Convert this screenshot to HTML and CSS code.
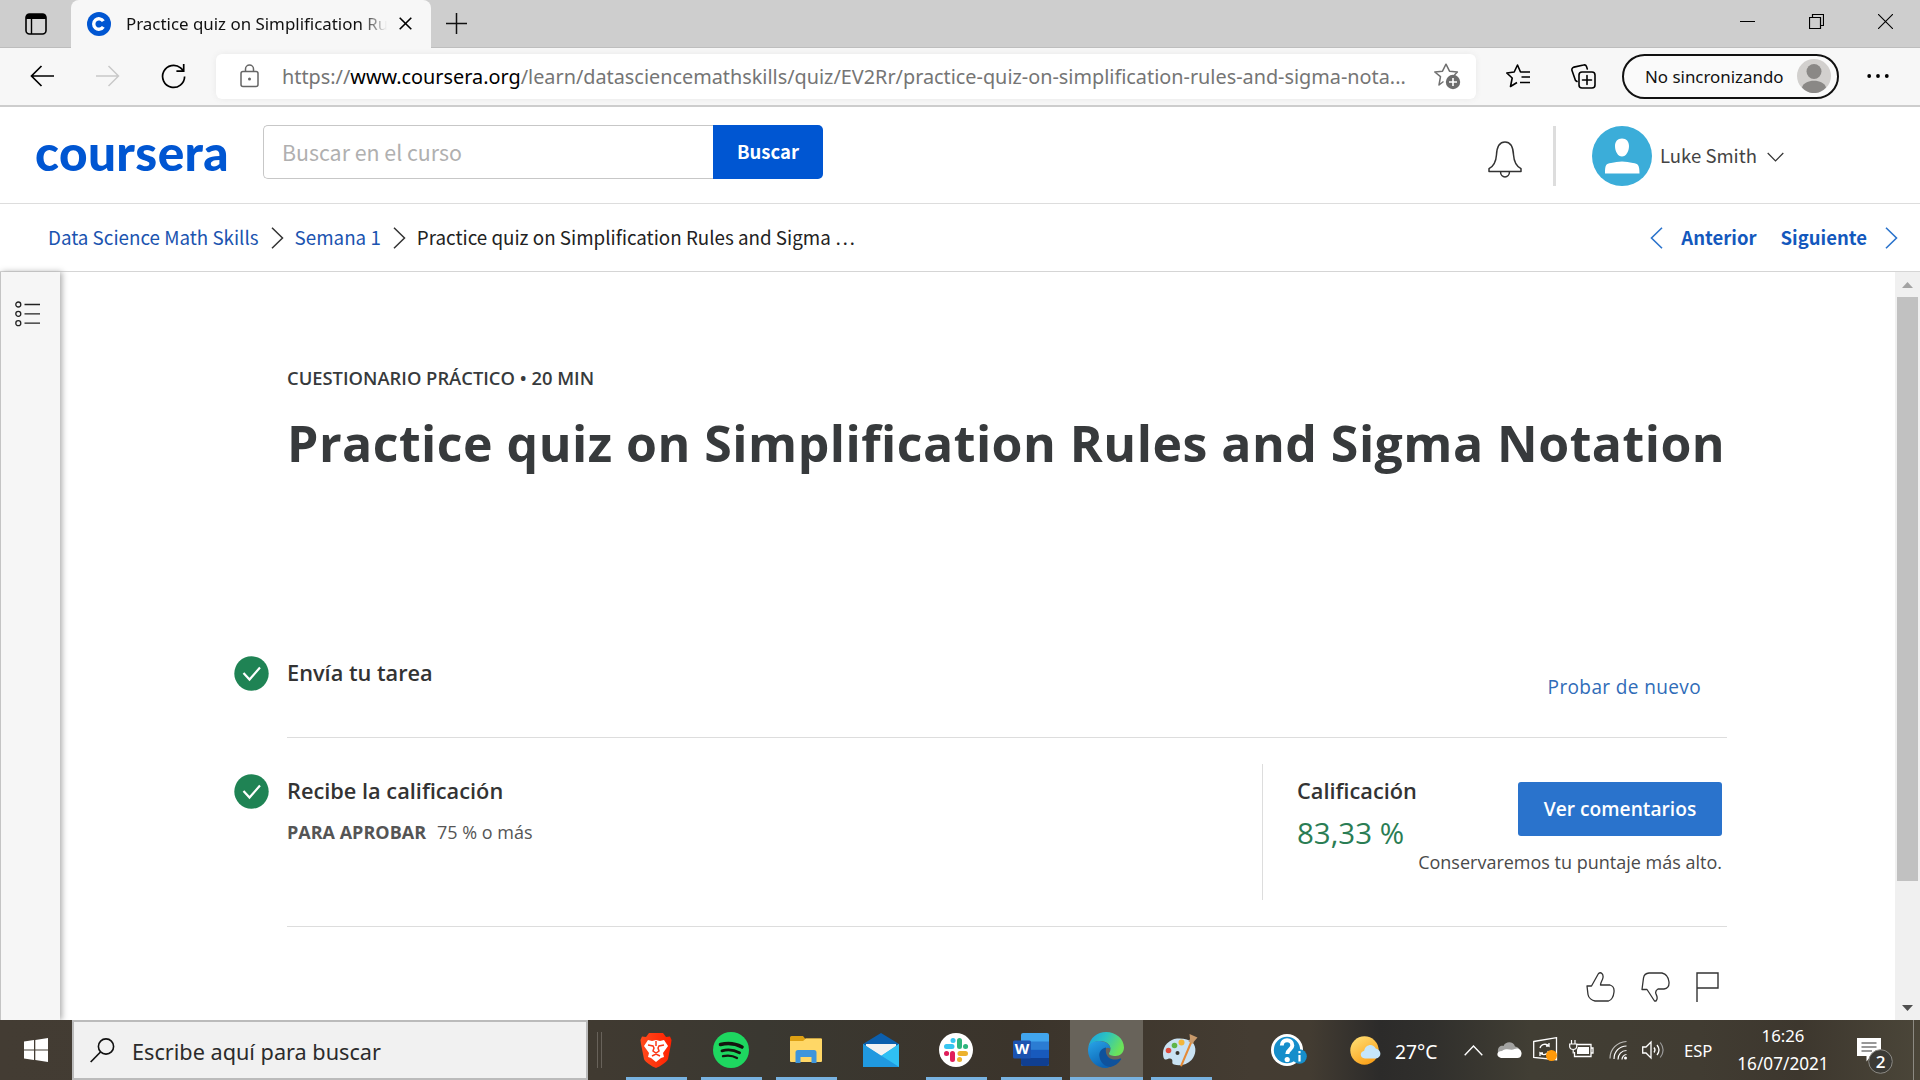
FILE: index.html
```html
<!DOCTYPE html>
<html lang="es">
<head>
<meta charset="utf-8">
<title>Practice quiz on Simplification Rules and Sigma Notation</title>
<link rel="stylesheet" href="styles.css">
</head>
<body>
<div class="screen">
  <div class="tabbar">
    <svg class="tab-actions" width="22" height="22" viewBox="0 0 22 22"><rect x="1" y="1" width="20" height="20" rx="3.5" fill="#d6d6d6" stroke="#000" stroke-width="1.6"/><path d="M1 6V4a3 3 0 0 1 3-3h14a3 3 0 0 1 3 3v2z"/><path d="M6.500 6v15" stroke="#000" stroke-width="1.400"/></svg>
    <div class="tab">
      <svg width="24" height="24" viewBox="0 0 24 24"><circle cx="12" cy="12" r="12" fill="#0056d2"/><path d="M16.300 9.200a5.200 5.200 0 1 0 0 5.600" fill="none" stroke="#fff" stroke-width="3.400"/></svg>
      <span class="tab-title">Practice quiz on Simplification Ru</span>
      <svg class="tab-close" width="13" height="13" viewBox="0 0 13 13"><path d="M.7.7l11.600 11.600M12.300.7L.7 12.300" stroke="#000" stroke-width="1.600"/></svg>
    </div>
    <svg class="tab-new" width="21" height="21" viewBox="0 0 21 21"><path d="M10.500 0v21M0 10.500h21" stroke="#111" stroke-width="1.500"/></svg>
    <div class="window-buttons">
      <svg width="15" height="15" viewBox="0 0 15 15"><path d="M0 7.500h15" stroke="#000"/></svg>
      <svg width="15" height="15" viewBox="0 0 15 15"><path d="M.5 3.500h11v11H.5zM3.500 3.500v-3h11v11h-3" fill="none" stroke="#000" stroke-width="1.200"/></svg>
      <svg width="15" height="15" viewBox="0 0 15 15"><path d="M0 0l15 15M15 0L0 15" stroke="#000" stroke-width="1.100"/></svg>
    </div>
  </div>

  <div class="toolbar">
    <svg class="nav-back" width="24" height="22" viewBox="0 0 24 22"><path d="M24 11H1.500M11.500 1l-10 10 10 10" fill="none" stroke="#000" stroke-width="1.700"/></svg>
    <svg class="nav-forward" width="24" height="22" viewBox="0 0 24 22"><path d="M0 11h22.500M12.500 1l10 10-10 10" fill="none" stroke="#c9c9c9" stroke-width="1.500"/></svg>
    <svg class="nav-reload" width="25" height="25" viewBox="0 0 25 25"><path d="M23.600 12.500a11 11 0 1 1-4-8.600l3 3M22.700 0v7.200h-7.300" fill="none" stroke="#000" stroke-width="1.700"/></svg>
    <div class="address">
      <svg width="19" height="24" viewBox="0 0 19 24"><rect x="1" y="7.500" width="17" height="15" rx="2" fill="none" stroke="#666" stroke-width="1.500"/><path d="M5.500 7.500V5a4 4 0 0 1 8 0v2.500" fill="none" stroke="#666" stroke-width="1.500"/><circle cx="9.500" cy="15" r="1.500" fill="#666"/></svg>
      <span class="url">https://<b>www.coursera.org</b>/learn/datasciencemathskills/quiz/EV2Rr/practice-quiz-on-simplification-rules-and-sigma-nota...</span>
      <svg class="star-add" width="27" height="27" viewBox="0 0 27 27"><path d="M9.500 18.500L5 22l1.500-8.300L.8 9l7.700-.8L12 1.200l3.500 7 7.900.8-3 3" fill="none" stroke="#707070" stroke-width="1.500" stroke-linejoin="round"/><circle cx="19" cy="19" r="7.200" fill="#6c6c6c"/><path d="M19 15v8M15 19h8" stroke="#fff" stroke-width="1.600"/></svg>
    </div>
    <svg class="favorites" width="25" height="24" viewBox="0 0 25 24"><path d="M11 18.500l-6.500 4 1.700-8.500L.8 9l7.400-1L11.500 1l3 7h9.500M15.500 13H24M14 18.500h10" fill="none" stroke="#000" stroke-width="1.600" stroke-linejoin="round"/></svg>
    <svg class="collections" width="25" height="25" viewBox="0 0 25 25"><rect x="8" y="8" width="16" height="16" rx="3" fill="none" stroke="#000" stroke-width="1.600"/><path d="M16 11.500v9M11.500 16h9M6 17.500l-1.500-1L1 6.500C.5 5 1.500 3.600 3 3.100L12.500 1c1.500-.4 2.500.2 3 1.600l.8 2.400" fill="none" stroke="#000" stroke-width="1.600" stroke-linecap="round"/></svg>
    <div class="profile">
      <span>No sincronizando</span>
      <svg width="34" height="34" viewBox="0 0 34 34"><circle cx="17" cy="17" r="17" fill="#d2d0ce"/><circle cx="17" cy="12.500" r="7.500" fill="#8a8886"/><path d="M5 28.500c2-9 22-9 24 0C22 36 12 36 5 28.500z" fill="#8a8886"/></svg>
    </div>
    <svg class="more" width="22" height="4" viewBox="0 0 22 4"><circle cx="2.200" cy="2" r="1.900"/><circle cx="11" cy="2" r="1.900"/><circle cx="19.800" cy="2" r="1.900"/></svg>
  </div>

  <header class="site-header">
    <div class="logo">coursera</div>
    <div class="search"><div class="search-input">Buscar en el curso</div><div class="search-button">Buscar</div></div>
    <svg class="bell" width="34" height="37" viewBox="0 0 34 37"><path d="M1 30.500v-2.800c5-2.700 7-6.700 7.500-14C9 4 12.500 1 17 1s8 3 8.500 12.700c.5 7.300 2.500 11.300 7.500 14v2.800zM12.500 30.500c0 7.200 9 7.200 9 0" fill="none" stroke="#333" stroke-width="1.500" stroke-linejoin="round"/></svg>
    <div class="header-divider"></div>
    <svg class="avatar" width="60" height="60" viewBox="0 0 60 60"><circle cx="30" cy="30" r="30" fill="#3badd9"/><path d="M30 12.500c4.500 0 7 3 7 7.500 0 5.500-3 10.500-7 10.500s-7-5-7-10.500c0-4.500 2.500-7.500 7-7.500zM13 47.500c0-9 1-9.800 6-10.500 4-.5 7-1.500 11-1.500s7 1 11 1.500c5 .7 6.500 1.500 6.500 10.500z" fill="#fff"/></svg>
    <span class="user">Luke Smith</span>
    <svg class="user-caret" width="17" height="10" viewBox="0 0 17 10"><path d="M.7 1l7.800 8 7.800-8" fill="none" stroke="#333" stroke-width="1.200"/></svg>
  </header>

  <nav class="crumbs">
    <a>Data Science Math Skills</a>
    <svg width="13" height="22" viewBox="0 0 13 22"><path d="M1 .7L11.500 11 1 21.300" fill="none" stroke="#333" stroke-width="1.500"/></svg>
    <a>Semana 1</a>
    <svg width="13" height="22" viewBox="0 0 13 22"><path d="M1 .7L11.500 11 1 21.300" fill="none" stroke="#333" stroke-width="1.500"/></svg>
    <span class="current">Practice quiz on Simplification Rules and Sigma …</span>
    <div class="pager">
      <svg width="13" height="22" viewBox="0 0 13 22"><path d="M12 .7L1.500 11 12 21.300" fill="none" stroke="#2a73cc" stroke-width="1.600"/></svg>
      <b>Anterior</b>
      <b class="next">Siguiente</b>
      <svg width="13" height="22" viewBox="0 0 13 22"><path d="M1 .7L11.500 11 1 21.300" fill="none" stroke="#2a73cc" stroke-width="1.600"/></svg>
    </div>
  </nav>

  <div class="body">
    <aside class="rail">
      <svg width="26" height="26" viewBox="0 0 26 26"><g fill="none" stroke="#222" stroke-width="1.300"><circle cx="3.300" cy="3.500" r="2.500"/><circle cx="3.300" cy="12.800" r="2.500"/><circle cx="3.300" cy="22.200" r="2.500"/><path d="M9.500 3.500H25M9.500 12.800H25M9.500 22.200H25"/></g></svg>
    </aside>
    <main class="content">
      <div class="overline">CUESTIONARIO PRÁCTICO • 20 MIN</div>
      <h1>Practice quiz on Simplification Rules and Sigma Notation</h1>
      <section class="step submit">
        <svg class="check" width="35" height="35" viewBox="0 0 35 35"><circle cx="17.500" cy="17.500" r="17.200" fill="#1f8354"/><path d="M9.500 17l6 6.500 10.500-12" fill="none" stroke="#fff" stroke-width="2.200"/></svg>
        <h2>Envía tu tarea</h2>
        <a class="retry">Probar de nuevo</a>
      </section>
      <section class="step grade">
        <svg class="check" width="35" height="35" viewBox="0 0 35 35"><circle cx="17.500" cy="17.500" r="17.200" fill="#1f8354"/><path d="M9.500 17l6 6.500 10.500-12" fill="none" stroke="#fff" stroke-width="2.200"/></svg>
        <div class="grade-text">
          <h2>Recibe la calificación</h2>
          <p><b>PARA APROBAR</b><span>75 % o más</span></p>
        </div>
        <div class="result">
          <div class="score"><h2>Calificación</h2><div class="percent">83,33 %</div></div>
          <div class="feedback"><div class="button">Ver comentarios</div><div class="note">Conservaremos tu puntaje más alto.</div></div>
        </div>
      </section>
      <div class="reactions">
        <svg width="29" height="30" viewBox="0 0 29 30"><path d="M1 14h4.500L12.500 1.500c2.500-2 5 .5 4.500 4-.4 3-2.500 4.500-2.500 7.500H24c3.500 1 4.300 4 4 7-.5 4.500-2.500 8-5.500 9H9c-3-.5-6.500-3-7-6.500z" fill="none" stroke="#333" stroke-width="1.300" stroke-linejoin="round"/></svg>
        <svg width="29" height="30" viewBox="0 0 29 30"><path d="M1 17.500L2.500 6C3 3 5 1.200 8 1h13c4 1 6.500 4 7 9 .3 4-1.500 6.500-5 7h-6c-2.500 1.500-3 2.500-2 5 .8 2 2.500 4.500 0 7h-1.500L8 20.500l-2-3z" fill="none" stroke="#333" stroke-width="1.300" stroke-linejoin="round"/></svg>
        <svg width="23" height="30" viewBox="0 0 23 30"><path d="M1 30V1h21v15H1" fill="none" stroke="#333" stroke-width="1.400"/></svg>
      </div>
    </main>
    <div class="scrollbar">
      <svg width="11" height="6" viewBox="0 0 11 6"><path d="M0 6L5.500 0 11 6z" fill="#a3a3a3"/></svg>
      <div class="thumb"></div>
      <svg class="down" width="11" height="6" viewBox="0 0 11 6"><path d="M0 0l5.500 6L11 0z" fill="#505050"/></svg>
    </div>
  </div>

  <footer class="taskbar">
    <div class="start"><svg width="24" height="24" viewBox="0 0 24 24"><path d="M0 3.500l10-1.400v9.300H0zM11.300 1.900L24 0v11.400H11.300zM0 12.600h10v9.300L0 20.500zM11.300 12.600H24V24l-12.700-1.900z" fill="#fff"/></svg></div>
    <div class="task-search">
      <svg width="25" height="25" viewBox="0 0 25 25"><circle cx="16" cy="8.500" r="7.600" fill="none" stroke="#111" stroke-width="1.600"/><path d="M10.500 14L.7 24" stroke="#111" stroke-width="1.700"/></svg>
      <span>Escribe aquí para buscar</span>
    </div>
    <div class="grip"></div>
    <div class="apps">
      <div class="app open"><svg width="32" height="36" viewBox="0 0 32 36"><defs><linearGradient id="brave"><stop offset="0" stop-color="#ff4a1c"/><stop offset="1" stop-color="#ff2000"/></linearGradient></defs><path d="M9 1h14l3 4 4-.5L31.500 8 31 12l-3 15c-1 3-8 7.500-12 9-4-1.500-11-6-12-9L1 12 .5 8 2 4.500 6 5z" fill="url(#brave)"/><path d="M8 8l4 1 4-1 4 1 4-1 4 6-5 7 1 4-3 1-5 4-5-4-3-1 1-4-5-7z" fill="#fff"/><path d="M8 13l5 1 1 2-1 3 3 2 3-2-1-3 1-2 5-1M16 9v5M12 24l4-2 4 2" fill="none" stroke="#fb3918" stroke-width="1.500"/></svg></div>
      <div class="app open"><svg width="36" height="36" viewBox="0 0 36 36"><circle cx="18" cy="18" r="18" fill="#1ed760"/><g fill="none" stroke="#15150f" stroke-linecap="round"><path d="M7.500 12.500c8-2 15-1 21.500 2.500" stroke-width="3.600"/><path d="M9 18.800c6.500-1.800 12-1 17.500 2" stroke-width="2.900"/><path d="M10 24.200c5.500-1.200 10-.5 14 1.800" stroke-width="2.300"/></g></svg></div>
      <div class="app open"><svg width="32" height="28" viewBox="0 0 32 28"><path d="M0 1.500Q0 0 1.500 0H13l2 2.500h16q1 0 1 1V6H0z" fill="#dda013"/><path d="M0 5h13l3-2.500h15q1 0 1 1V25q0 1-1 1H1q-1 0-1-1z" fill="#ffd766"/><path d="M5.500 27V16.500Q5.500 14 8 14h16q2.500 0 2.500 2.500V27h-5v-6h-11v6z" fill="#3e95dc"/></svg></div>
      <div class="app"><svg width="36" height="34" viewBox="0 0 36 34"><path d="M0 11L18 0l18 11v4H0z" fill="#0b5fae"/><path d="M3 11h30v10L18 30 3 21z" fill="#f2f2f2"/><path d="M0 11l18 12 18-12v23H0z" fill="#28a8ea"/><path d="M18 23L36 34V11z" fill="#2fc0f4"/><path d="M0 11l36 23H0z" fill="#2099e0"/></svg></div>
      <div class="app open"><svg width="34" height="34" viewBox="0 0 34 34"><circle cx="17" cy="17" r="17" fill="#fff"/><g fill="none" stroke-width="5" stroke-linecap="round"><path d="M14 7.500h.1M7.500 13.500H13" stroke="#36c5f0"/><path d="M20.500 7.500v6M26.500 13.500h.1" stroke="#2eb67d"/><path d="M26.500 20.500H21M20.500 26.500h.1" stroke="#ecb22e"/><path d="M13.500 26.500v-6M7.500 20.500h.1" stroke="#e01e5a"/></g></svg></div>
      <div class="app open"><svg width="36" height="34" viewBox="0 0 36 34"><rect x="8" width="28" height="33" rx="2" fill="#41a5ee"/><path d="M8 8.500h28v8H8z" fill="#2b7cd3"/><path d="M8 16.500h28v8.500H8z" fill="#185abd"/><path d="M8 25h28v6q0 2-2 2H10q-2 0-2-2z" fill="#103f91"/><rect y="7.500" width="18" height="18" rx="1.500" fill="#1b53b0"/><text x="9" y="21" text-anchor="middle" class="word-w">W</text></svg></div>
      <div class="app open active"><svg width="36" height="36" viewBox="0 0 36 36"><defs><linearGradient id="edge-a" x1="0" y1="0" x2="1" y2=".4"><stop offset="0" stop-color="#1b9de2"/><stop offset=".5" stop-color="#2cc3c0"/><stop offset="1" stop-color="#6be25a"/></linearGradient><linearGradient id="edge-b" x1="0" y1="0" x2=".5" y2="1"><stop offset="0" stop-color="#29a5e8"/><stop offset="1" stop-color="#0b63b4"/></linearGradient></defs><path d="M.3 15C2 5.500 9.500 0 18 0c10 0 18 7 18 15.500 0 5-4 8.500-8.500 8.500-4 0-6.500-1-6.500-2.500 0-1 1.500-1.500 1.500-4.500 0-4-4-8-10-8C6.500 9 2 12 .3 15z" fill="url(#edge-a)"/><path d="M0 18C0 12 5 9 11 9c7 0 11.500 4 11.500 8-3-3-8 0-8 6 0 7 6 10.500 11 9.500C23 34.800 20.500 36 18 36 8 36 0 28 0 18z" fill="url(#edge-b)"/><path d="M18 15.500c-5 1-7.500 5-6.500 9.500 1 6 6 10 11 10 4-.8 8-3.500 10.500-7.500.5-1-.3-1.300-1-1-4.500 2.500-16 1.500-14-11z" fill="#0f529c"/></svg></div>
      <div class="app open"><svg width="35" height="34" viewBox="0 0 35 34"><path d="M14 5.500C6 6.500 0 13 0 20c0 4 1 7 3 6.500 2.500-.7 4.500-2 6 0 1.200 1.800-1 4 2 5 6 2 13 0 17.500-4.500C33 22 34 14 29.500 9.500 25.500 6 20 5 14 5.500z" fill="#c9e2f3"/><circle cx="5.500" cy="17.500" r="2.800" fill="#e04b3d"/><circle cx="11.500" cy="12.500" r="2.800" fill="#5fb548"/><circle cx="18.500" cy="9.500" r="3" fill="#f3b63a"/><circle cx="14.500" cy="20" r="2" fill="#38342c"/><path d="M27.500 8l2 .8L19 33.500l-2-.5z" fill="#e58a35"/><path d="M26.500 1l8 3.500-3.500 4-1 2.200-4.500-2L27 6z" fill="#c99a6b"/></svg></div>
    </div>
    <svg class="help" width="36" height="32" viewBox="0 0 36 32"><circle cx="16" cy="16" r="16" fill="#fff"/><circle cx="16" cy="16" r="13.200" fill="#168ecb"/><path d="M10.800 11.500c0-7 10.500-7 10.500 0 0 4-5 4-5 8.500" fill="none" stroke="#fff" stroke-width="4"/><circle cx="16.200" cy="25.500" r="2.600" fill="#fff"/><circle cx="28.500" cy="22.500" r="7.300" fill="#168ecb"/><path d="M28.500 21v6.500M28.500 17v2.200" stroke="#fff" stroke-width="2.200"/></svg>
    <svg class="weather" width="31" height="29" viewBox="0 0 31 29"><defs><linearGradient id="sun" x1="0" y1="0" x2=".6" y2="1"><stop offset="0" stop-color="#ffe27a"/><stop offset="1" stop-color="#fba21b"/></linearGradient></defs><circle cx="14.500" cy="14.500" r="14.200" fill="url(#sun)"/><path d="M15 22.500c-5 0-6-6.500-.8-7.800 1-6.500 9-8 11.500-2.200 6 1 6.500 9.500 0 10z" fill="#c5e6fb"/></svg>
    <span class="temp">27°C</span>
    <svg class="chevron" width="19" height="11" viewBox="0 0 19 11"><path d="M.7 10.200L9.500 1l8.800 9.200" fill="none" stroke="#fff" stroke-width="1.400"/></svg>
    <svg class="cloud" width="25" height="17" viewBox="0 0 25 17"><path d="M1 11C0 5 4 3 6.500 4c2-5 10-5 11.500.5 4 .5 6 4 5 8z" fill="#a2a2a0"/><path d="M4 16c-5-1-5-7 1-7 5-3.500 9 0 12.500-2C22 5 25 9 24.500 12c-.3 3-2 4-4 4z" fill="#fff"/></svg>
    <svg class="sync" width="25" height="25" viewBox="0 0 25 25"><path d="M.7 4.500L23.500.7v22L.7 20.500z" fill="none" stroke="#fff" stroke-width="1.300"/><path d="M7 11c1-4 6-5 9-2V6M16 9h-3M15.500 14c-1 4-5.500 4.500-8.500 2v3M7 16h3" fill="none" stroke="#fff" stroke-width="1.300"/><circle cx="18.500" cy="18.500" r="5.500" fill="#ff9a0a"/></svg>
    <svg class="battery" width="25" height="18" viewBox="0 0 25 18"><path d="M8 4.500h14v12H5.500V12M22.500 8H24v5h-1.500" fill="none" stroke="#fff" stroke-width="1.300"/><path d="M9 7h11v7H8V10z" fill="#fff"/><path d="M2.500 0v4M6 0v4M.7 4h7v3q-.5 2.500-3.500 2.500T.7 7zM4.200 9.500v4" fill="none" stroke="#fff" stroke-width="1.200"/></svg>
    <svg class="wifi" width="19" height="20" viewBox="0 0 19 20"><g fill="none" stroke="#fff" stroke-width="1.200"><path d="M1 18.500C1 9 8 2 17.500 1.500" opacity=".65"/><path d="M5 19C5 11.500 10.500 6 17.500 6M9 19.500c0-5 3.500-9 8.500-9M13 19.500c0-2.500 2-5 4.500-5"/></g><circle cx="16.500" cy="18" r="1.500" fill="#fff"/></svg>
    <svg class="sound" width="23" height="20" viewBox="0 0 23 20"><path d="M.7 7v6H4l5 5V2L4 7zM12 7.500q2 2.500 0 5M15 5q4 5 0 10" fill="none" stroke="#fff" stroke-width="1.300"/><path d="M18.200 2.500q5.800 7.500 0 15" fill="none" stroke="#999" stroke-width="1.200"/></svg>
    <span class="lang">ESP</span>
    <div class="clock"><div class="time">16:26</div><div>16/07/2021</div></div>
    <svg class="notify" width="37" height="37" viewBox="0 0 37 37"><path d="M0 0h24v18H14l-4.500 5.500V18H0z" fill="#fff"/><path d="M4.500 5h15M4.500 9h15M4.500 13H15" stroke="#333" stroke-width="1.200"/><circle cx="23.500" cy="23.500" r="11.800" fill="#3b3a35" stroke="#8b8984"/><text x="23.500" y="30" text-anchor="middle" class="badge">2</text></svg>
    <div class="peek"></div>
  </footer>
</div>
</body>
</html>
```
FILE: styles.css
```css
* { box-sizing: border-box; }
body { margin: 0; background: #fff; }
h1, h2, p { margin: 0; }
svg { display: block; flex: none; }
.screen {
  width: 1920px; height: 1080px; overflow: hidden;
  display: flex; flex-direction: column; white-space: nowrap;
  font-family: "Open Sans", sans-serif; color: #373a3c;
}

/* browser tabs */
.tabbar { height: 48px; flex: none; background: #cecece; display: flex; align-items: center; border-bottom: 1px solid #bdbdbd; font-family: "Noto Sans", sans-serif; }
.tab-actions { margin-left: 25px; }
.tab { width: 360px; height: 48px; margin-left: 24px; padding-left: 16px; display: flex; align-items: center; background: #f7f7f7; border-radius: 8px 8px 0 0; }
.tab-title { width: 265px; margin-left: 15px; font-size: 16.9px; line-height: 30px; color: #111; -webkit-mask-image: linear-gradient(to right, #000 235px, transparent 261px); mask-image: linear-gradient(to right, #000 235px, transparent 261px); }
.tab-close { margin-left: 8px; }
.tab-new { margin-left: 15px; }
.window-buttons { margin-left: auto; margin-right: 27px; padding-bottom: 4px; display: flex; gap: 54px; }

/* address bar */
.toolbar { height: 59px; flex: none; background: #f7f7f7; border-bottom: 2px solid #cdcdcd; display: flex; align-items: center; font-family: "Noto Sans", sans-serif; padding-bottom: 1px; }
.nav-back { margin-left: 30px; }
.nav-forward { margin-left: 42px; }
.nav-reload { margin-left: 41px; }
.address { width: 1260px; height: 45px; margin-left: 30px; padding-left: 24px; display: flex; align-items: center; background: #fff; border-radius: 6px; box-shadow: 0 0 6px #e9e9e9; }
.url { width: 1129px; margin-left: 23px; font-size: 19.83px; color: #757575; }
.url b { font-weight: 400; color: #000; }
.star-add { margin-left: 23px; }
.favorites { margin-left: 30px; }
.collections { margin-left: 40px; }
.profile { width: 217px; height: 45px; margin-left: 26px; padding-left: 21px; border: 2px solid #111; border-radius: 23px; background: #fafafa; display: flex; align-items: center; font-size: 16.9px; color: #111; }
.profile span { width: 152px; }
.more { margin-left: 28px; }

/* site header */
.site-header { height: 97px; flex: none; border-bottom: 1px solid #ddd; display: flex; align-items: center; font-family: "Noto Sans CJK SC", sans-serif; }
.logo { width: 192px; margin: -6px 0 0 35px; font: 900 49.5px/50px Lato, sans-serif; letter-spacing: .4px; color: #0056d2; }
.search { width: 560px; height: 54px; margin-left: 36px; margin-top: -6px; display: flex; }
.search-input { flex: 1; border: 1px solid #c7c7c7; border-right: 0; border-radius: 5px 0 0 5px; padding-left: 18px; font-size: 21.35px; line-height: 51px; color: #b0b0b0; }
.search-button { width: 110px; background: #0056d2; color: #fff; border-radius: 0 5px 5px 0; font-size: 18.5px; font-weight: 700; line-height: 52px; text-align: center; }
.bell { margin: 9px 0 0 665px; }
.header-divider { width: 3px; height: 60px; margin-left: 31px; margin-top: 2px; background: #ddd; }
.avatar { margin-left: 36px; margin-top: 2px; }
.user { width: 107px; margin-left: 8px; font-size: 18.55px; line-height: 28px; color: #444; }
.user-caret { margin-top: 4px; }

/* breadcrumbs */
.crumbs { height: 67px; flex: none; padding-left: 48px; display: flex; align-items: center; font: 18.8px/30px "Noto Sans CJK SC", sans-serif; color: #1b54b0; }
.crumbs a { margin-top: -1px; }
.crumbs svg { margin: 0 11px 0 12px; }
.crumbs .current { color: #222; margin-top: -1px; }
.pager { margin-left: auto; display: flex; align-items: center; margin-right: 11px; color: #1358bd; font-size: 18.5px; }
.pager b { margin: -1px 0 0 7px; }
.pager .next { margin-left: 24px; margin-right: 6px; }

/* page body */
.body { height: 749px; flex: none; border-top: 1px solid #d5d5d5; display: flex; }
.rail { width: 60px; padding: 29px 0 0 14px; background: #f6f6f6; border-left: 1px solid #c4c4c4; box-shadow: 2px 0 6px #aaa; }
.content { width: 1440px; margin-left: 227px; display: flex; flex-direction: column; }
.overline { margin-top: 93px; font-size: 18.38px; font-weight: 600; line-height: 26px; }
h1 { margin: 17px 0 162px; font-size: 50px; font-weight: 700; line-height: 70px; letter-spacing: .48px; }
h2 { font-size: 21.75px; font-weight: 600; line-height: 30px; }
.step { margin-left: -53px; display: flex; position: relative; }
.step::after { content: ""; position: absolute; left: 53px; right: 0; bottom: 0; height: 1px; background: #ddd; }
.check { margin-right: 18px; }
.submit { height: 99px; padding-top: 17px; margin-top: -1px; }
.retry { margin: 17px 26px 0 auto; font-size: 19.06px; font-weight: 500; line-height: 28px; color: #2f6cb8; letter-spacing: .36px; }
.grade { height: 189px; padding-top: 36px; }
.grade-text { flex: 1; }
.grade p { margin-top: 13px; font-size: 18px; line-height: 26px; color: #555; }
.grade p b { display: inline-block; width: 150px; }
.result { width: 465px; height: 136px; margin-top: -10px; padding: 10px 5px 0 34px; border-left: 1px solid #ddd; display: flex; }
.score { width: 120px; }
.percent { margin-top: 7px; font-size: 29.5px; line-height: 40px; color: #2a7d54; }
.feedback { flex: 1; display: flex; flex-direction: column; align-items: flex-end; padding-top: 8px; }
.button { width: 204px; height: 54px; border-radius: 3px; background: #2a73cc; color: #fff; font-size: 19.2px; font-weight: 600; line-height: 53px; text-align: center; }
.note { margin-top: 13px; font-size: 18px; line-height: 26px; color: #4a4a4a; }
.check + h2, .grade-text h2, .score h2 { margin-top: 2px; color: #333; }
.reactions { display: flex; justify-content: flex-end; gap: 26px; margin: 45px 8px 0 0; }

.scrollbar { width: 25px; margin-left: auto; background: #f0f0f0; display: flex; flex-direction: column; align-items: center; padding: 10px 0 9px; }
.thumb { width: 21px; height: 584px; margin-top: 9px; background: #c1c1c1; }
.down { margin-top: auto; }

/* taskbar */
.taskbar { height: 60px; flex: none; display: flex; align-items: center; color: #fff; font-family: "Noto Sans", sans-serif; background: linear-gradient(90deg, #433c33 0, #403a31 600px, #3a3831 760px, #3b342b 1020px, #443c32 1250px, #433c32 1310px, #2c2b2a 1380px, #302f2c 1430px, #413e34 1530px, #413c32 1700px, #3d372e 1800px, #4b4639 1920px); }
.start { width: 72px; padding-left: 24px; }
.task-search { width: 516px; height: 60px; background: #f1f1f1; border: 2px solid #bbb; padding-left: 16px; display: flex; align-items: center; font-size: 21.67px; color: #2b2b2b; }
.task-search span { margin-left: 17px; padding-top: 2px; }
.grip { width: 5px; height: 36px; margin-left: 9px; border: solid #68625a; border-width: 0 1px; }
.apps { display: flex; margin-left: 17px; height: 60px; }
.app { width: 75px; height: 60px; padding-right: 2px; display: flex; align-items: center; justify-content: center; position: relative; }
.app.active { background: linear-gradient(90deg, transparent 1px, #68635a 1px, #68635a 74px, transparent 74px); }
.app.open::after { content: ""; position: absolute; left: 7px; right: 7px; bottom: 0; height: 3px; background: #78b2e0; }
.app.active::after { left: 1px; right: 1px; }
.word-w { font: 700 15px "Open Sans", sans-serif; fill: #fff; }
.help { margin-left: 52px; }
.weather { margin-left: 43px; }
.temp { width: 69px; margin-left: 14px; padding-top: 3px; font-size: 19.3px; }
.cloud { margin-left: 14px; }
.sync { margin-left: 11px; margin-top: -1px; }
.battery { margin-left: 11px; margin-top: -2px; }
.wifi { margin-left: 15px; }
.sound { margin-left: 14px; }
.lang { width: 52px; margin-left: 19px; padding-top: 1px; font-size: 16.6px; }
.clock { width: 94px; font-size: 17.2px; line-height: 28px; text-align: center; }
.time { font-size: 16.8px; }
.notify { margin-left: 27px; margin-top: 13px; }
.badge { font: 600 17px "Open Sans", sans-serif; fill: #fff; }
.peek { width: 1px; height: 60px; margin-left: auto; margin-right: 6px; background: #8c8a82; }
```
